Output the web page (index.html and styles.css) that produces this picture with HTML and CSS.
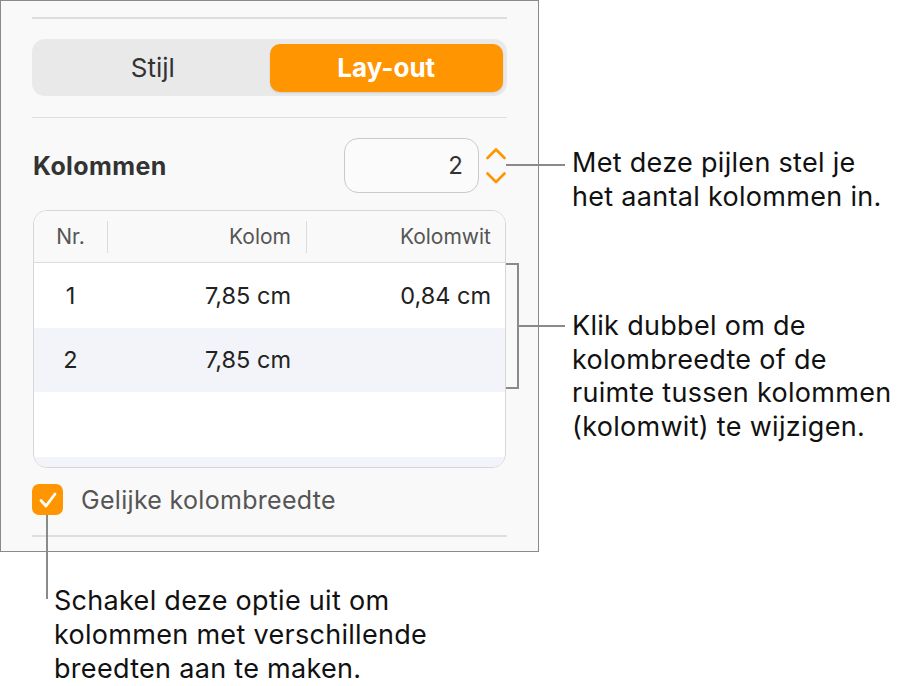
FILE: index.html
```html
<!DOCTYPE html>
<html lang="nl">
<head>
  <meta charset="UTF-8">
  <title>Kolommen – Lay-out</title>
  <link rel="stylesheet" href="styles.css">
</head>
<body>
  <div class="page">
    <div class="panel">
      <div class="sep"></div>
      <div class="segmented">
        <div class="seg">Stijl</div>
        <div class="seg active">Lay-out</div>
      </div>
      <div class="sep"></div>

      <div class="cols-row">
        <span class="cols-label">Kolommen</span>
        <div class="stepper">
          <div class="num-box">2</div>
          <svg class="arrows" width="20" height="36" viewBox="0 0 20 36">
            <path d="M1.5 10 L10 1.5 L18.5 10" fill="none" stroke="#ff9500" stroke-width="2.6" stroke-linecap="round" stroke-linejoin="round"/>
            <path d="M1.5 25.5 L10 34 L18.5 25.5" fill="none" stroke="#ff9500" stroke-width="2.6" stroke-linecap="round" stroke-linejoin="round"/>
          </svg>
        </div>
      </div>

      <div class="table">
        <div class="t-head">
          <div class="c1">Nr.</div>
          <div class="c2">Kolom</div>
          <div class="c3">Kolomwit</div>
        </div>
        <div class="t-row">
          <div class="c1">1</div>
          <div class="c2">7,85 cm</div>
          <div class="c3">0,84 cm</div>
        </div>
        <div class="t-row alt">
          <div class="c1">2</div>
          <div class="c2">7,85 cm</div>
          <div class="c3"></div>
        </div>
        <div class="t-row"></div>
        <div class="t-row alt"></div>
      </div>

      <label class="check">
        <span class="box">
          <svg width="22" height="22" viewBox="0 0 22 22">
            <path d="M4 11.5 L9 17 L18 5" fill="none" stroke="#fff" stroke-width="2.8" stroke-linecap="round" stroke-linejoin="round"/>
          </svg>
        </span>
        Gelijke kolombreedte
      </label>
      <div class="sep"></div>
    </div>

    <!-- toelichtingen -->
    <div class="lead lead-arrows"></div>
    <p class="note note-arrows">Met deze pijlen stel je<br>het aantal kolommen in.</p>

    <div class="bracket"></div>
    <div class="lead lead-table"></div>
    <p class="note note-table">Klik dubbel om de<br>kolombreedte of de<br>ruimte tussen kolommen<br>(kolomwit) te wijzigen.</p>

    <div class="lead-down"></div>
    <p class="note note-bottom">Schakel deze optie uit om<br>kolommen met verschillende<br>breedten aan te maken.</p>
  </div>
</body>
</html>
```

FILE: styles.css
```css
* { box-sizing: border-box; margin: 0; padding: 0; }
body { background: #fff; font-family: Inter, "Liberation Sans", sans-serif; color: #1c1c1c; }
.page { position: relative; width: 915px; height: 686px; overflow: hidden; }

.panel { width: 539px; background: #f9f9f9; border: 1px solid #8a8a8a; padding: 16px 31px 14px 31px; }
.sep { height: 1.5px; background: #dedede; }

.segmented { display: grid; grid-template-columns: 1fr 1fr; height: 57px; margin: 20px 0 21px; padding: 5px 4px 4px 4px;
  background: #e9e9e9; border-radius: 13px; }
.seg { display: flex; align-items: center; justify-content: center; font-size: 26px; color: #333; border-radius: 10px; }
.seg.active { background: #ff9500; color: #fff; font-weight: 700; box-shadow: 0 1px 2px rgba(0,0,0,0.12); }

.cols-row { display: flex; align-items: center; justify-content: space-between; margin-top: 20px; }
.cols-label { font-size: 25px; font-weight: 700; color: #333; letter-spacing: 0.4px; padding-left: 1px; }
.stepper { display: flex; align-items: center; gap: 7px; }
.num-box { width: 135px; height: 55px; border: 1.5px solid #cacaca; border-radius: 14px; background: #fbfbfb;
  font-size: 24px; color: #333; text-align: right; padding: 12px 15px 0 0; }
.arrows { margin-right: 1px; }

.table { margin: 17px 1px 0 1px; height: 258px; border: 1.5px solid #d6d6d6; border-radius: 14px;
  overflow: hidden; background: #fff; }
.t-head { display: flex; height: 52px; align-items: center; background: #f9f9f9; border-bottom: 1.5px solid #dcdcdc;
  font-size: 21px; color: #555; }
.t-row { display: flex; height: 64.5px; align-items: center; font-size: 23.5px; color: #222; }
.t-row.alt { background: #f2f4f9; }
.c1 { width: 73px; text-align: center; }
.c2 { width: 199px; text-align: right; padding-right: 15px; }
.c3 { flex: 1; text-align: right; padding-right: 14px; }
.t-head .c2, .t-head .c3 { border-left: 1.5px solid #dcdcdc; height: 32px; line-height: 32px; }

.check { display: flex; align-items: center; gap: 18px; margin: 16px 0 20px 0; font-size: 25px; color: #555; letter-spacing: 0.3px; }
.box { width: 31px; height: 31px; border-radius: 7px; background: #ff9500; display: flex; align-items: center; justify-content: center; }

.lead { position: absolute; height: 2px; background: #8a8a8a; }
.lead-arrows { left: 506px; top: 164px; width: 59px; }
.lead-table { left: 517px; top: 325px; width: 48px; }
.bracket { position: absolute; left: 506px; top: 263px; width: 13px; height: 126px; border: 2px solid #8a8a8a; border-left: none; }
.lead-down { position: absolute; left: 46px; top: 515px; width: 2px; height: 84px; background: #8a8a8a; }

.note { position: absolute; font-size: 27px; line-height: 33.5px; letter-spacing: 0.3px; color: #111; }
.note-arrows { left: 572px; top: 146px; }
.note-table { left: 572px; top: 309px; }
.note-bottom { left: 54px; top: 584px; line-height: 34px; }
```
